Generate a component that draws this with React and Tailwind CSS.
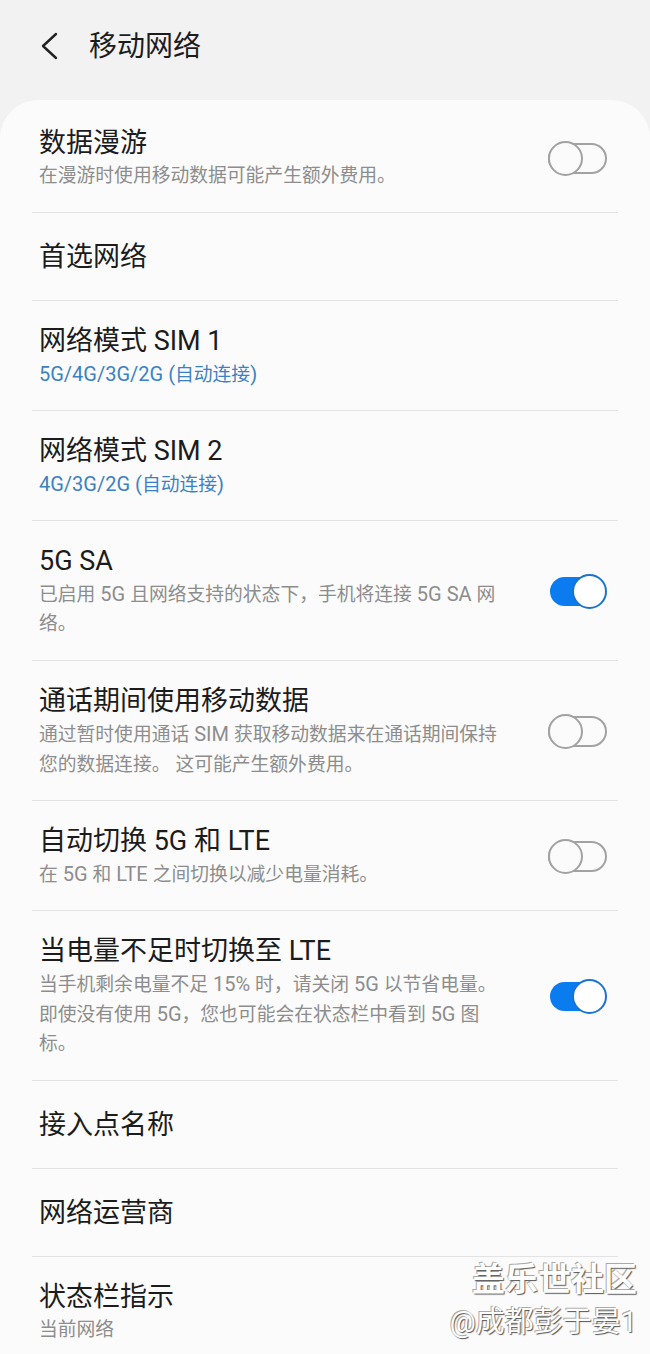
import React from 'react';

const rows = [
  { title: '数据漫游', sub: ['在漫游时使用移动数据可能产生额外费用。'], toggle: false },
  { title: '首选网络' },
  { title: '网络模式 SIM 1', sub: ['5G/4G/3G/2G (自动连接)'], blue: true },
  { title: '网络模式 SIM 2', sub: ['4G/3G/2G (自动连接)'], blue: true },
  { title: '5G SA', sub: ['已启用 5G 且网络支持的状态下，手机将连接 5G SA 网', '络。'], toggle: true },
  { title: '通话期间使用移动数据', sub: ['通过暂时使用通话 SIM 获取移动数据来在通话期间保持', '您的数据连接。 这可能产生额外费用。'], toggle: false },
  { title: '自动切换 5G 和 LTE', sub: ['在 5G 和 LTE 之间切换以减少电量消耗。'], toggle: false },
  { title: '当电量不足时切换至 LTE', sub: ['当手机剩余电量不足 15% 时，请关闭 5G 以节省电量。', '即使没有使用 5G，您也可能会在状态栏中看到 5G 图', '标。'], toggle: true },
  { title: '接入点名称' },
  { title: '网络运营商' },
  { title: '状态栏指示', sub: ['当前网络'] },
];

// latin runs in the small text are set a bit larger, as on the phone
const SubLine = ({ text }) =>
  text.split(/([\x20-\x7E]+)/).map((part, i) =>
    /^[\x20-\x7E]+$/.test(part) ? (
      <span key={i} className="text-[20px]">{part}</span>
    ) : (
      <span key={i}>{part}</span>
    )
  );

const Toggle = ({ on }) => {
  if (on) {
    return (
      <div className="relative w-[59px] h-[35px] shrink-0">
        <div className="absolute left-[2px] right-[10px] top-[3px] h-[29px] rounded-full bg-[#0a7cf0]" />
        <div className="absolute right-0 top-0 w-[35px] h-[35px] rounded-full bg-white border-2 border-[#1b73d1]" />
      </div>
    );
  }
  return (
    <div className="relative w-[59px] h-[35px] shrink-0">
      <div className="absolute left-0 right-0 top-[2px] h-[31px] rounded-full border-2 border-[#a2a2a2]" />
      <div className="absolute left-0 top-0 w-[35px] h-[35px] rounded-full bg-[#fbfbfb] border-2 border-[#a2a2a2]" />
    </div>
  );
};

const Row = ({ row, last }) => (
  <>
    <div
      className={`flex items-center pl-[7px] pr-[11px] ${row.sub ? 'pt-[22px] pb-[21px]' : 'h-[87px]'}`}
    >
      <div className="flex-1 min-w-0">
        <div className="text-[27px] leading-[36px] text-[#1c1c1c] whitespace-nowrap">{row.title}</div>
        {row.sub &&
          row.sub.map((line, i) => (
            <div
              key={i}
              className={`text-[18.8px] leading-[30px] h-[30px] whitespace-nowrap ${row.blue ? 'text-[#3b82c4]' : 'text-[#8d8d8d]'}`}
            >
              <SubLine text={line} />
            </div>
          ))}
      </div>
      {row.toggle !== undefined && <Toggle on={row.toggle} />}
    </div>
    {!last && <div className="h-px bg-[#e3e3e3]" />}
  </>
);

export default function App() {
  return (
    <div
      className="relative w-[650px] h-[1354px] overflow-hidden bg-[#f2f2f2]"
      style={{ fontFamily: 'Roboto, "Noto Sans CJK SC", sans-serif' }}
    >
      {/* header */}
      <div className="h-[100px] flex items-start pt-[29px] pl-[40px]">
        <svg width="20" height="30" viewBox="0 0 20 30" className="mt-[2px]">
          <polyline points="16,3 3,15 16,27" fill="none" stroke="#222" strokeWidth="2.4" strokeLinecap="round" strokeLinejoin="round" />
        </svg>
        <h1 className="ml-[29px] mt-[1px] text-[28px] leading-[34px] text-[#1c1c1c]">移动网络</h1>
      </div>

      {/* card */}
      <div className="bg-[#fbfbfb] rounded-t-[38px] px-[32px] pt-[3px] min-h-[1254px]">
        {rows.map((row, i) => (
          <Row key={i} row={row} last={i === rows.length - 1} />
        ))}
      </div>

      {/* watermark */}
      <div className="absolute right-[13px] bottom-[14px] flex flex-col items-end text-white [text-shadow:1px_1px_1px_#555,-1px_-1px_0_#aaa]">
        <div className="text-[33px] leading-[40px] font-bold">盖乐世社区</div>
        <div className="text-[29px] leading-[36px] mt-[4px]">@成都彭于晏1</div>
      </div>
    </div>
  );
}
